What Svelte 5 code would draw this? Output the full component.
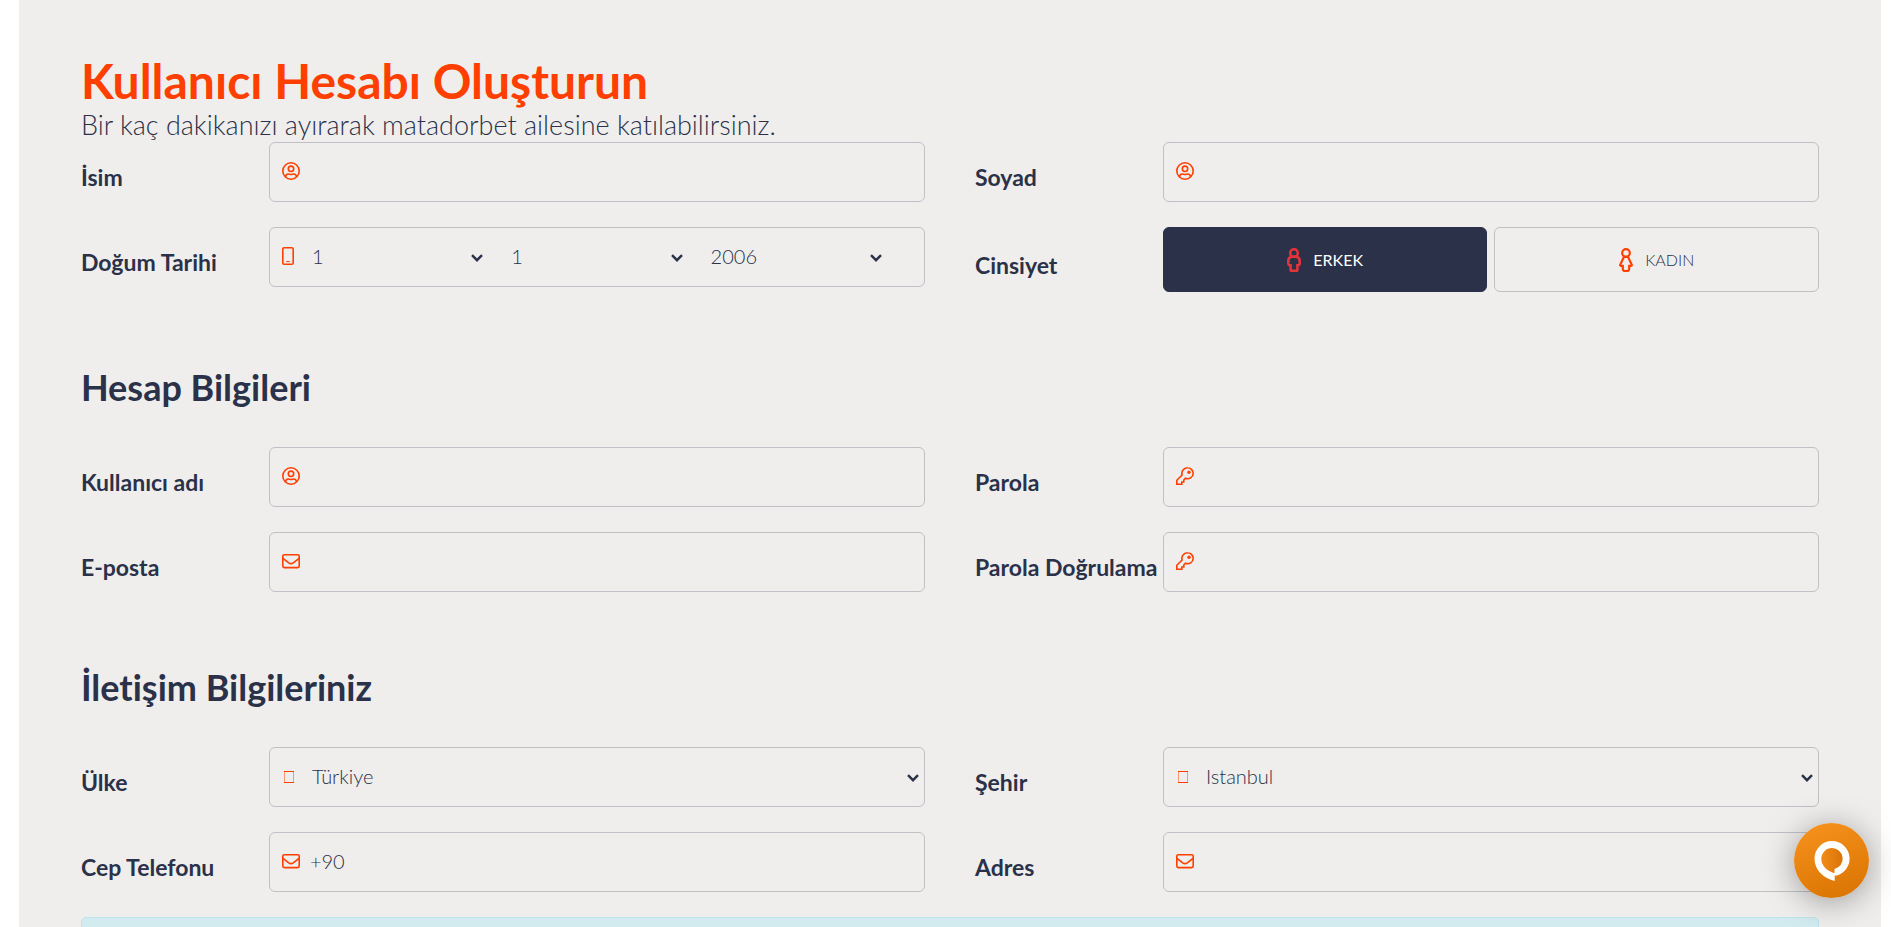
<script lang="ts">
  let firstName = $state('');
  let lastName = $state('');
  let day = $state(1);
  let month = $state(1);
  let year = $state(2006);
  let gender = $state('m');
  let username = $state('');
  let password = $state('');
  let email = $state('');
  let passwordAgain = $state('');
  let country = $state('Türkiye');
  let city = $state('Istanbul');
  let phone = $state('+90');
  let address = $state('');

  const range = (from: number, to: number) => Array.from({ length: to - from + 1 }, (_, i) => from + i);
  const days = range(1, 31);
  const months = range(1, 12);
  const years = range(1930, 2006).reverse();
</script>

{#snippet icon(name: string)}
  <svg class="icon" viewBox="0 0 18 18" aria-hidden="true">
    {#if name === 'user'}
      <circle cx="9" cy="9" r="8.2" />
      <circle cx="9" cy="6.8" r="2.7" />
      <path d="M3.4 14.8c.4-2 1.5-2.8 3-2.8.9 0 1.5.5 2.6.5s1.7-.5 2.6-.5c1.5 0 2.6.8 3 2.8" />
    {:else if name === 'mail'}
      <rect x=".8" y="2.8" width="16.4" height="12.8" rx="1.5" />
      <path d="M1 6.3l5.7 4.5c1.6 1.2 3 1.2 4.6 0L17 6.3" />
    {:else if name === 'key'}
      <path d="M11.6.8a5.6 5.6 0 0 0-5.5 7.2L.8 13.3v3.900h5v-2.200h2v-2l1.600-1.700a5.600 5.600 0 0 0 7.800-5.100A5.600 5.600 0 0 0 11.600.8z" />
      <circle class="dot" cx="13" cy="5.200" r="1.7" />
    {:else if name === 'phone'}
      <rect x=".8" y=".8" width="10.4" height="16.4" rx="1.3" />
      <path class="thin" d="M4.3 14.5h3.4" />
    {:else}
      <path class="thin" d="M2 4.5h10M2 15.5h10" />
      <path class="faint" d="M2.5 5v10M11.5 5v10" />
    {/if}
  </svg>
{/snippet}

{#snippet textField(id: string, label: string, iconName: string, type: string, get: () => string, set: (v: string) => void)}
  <div class="row">
    <label for={id}>{label}</label>
    <div class="field">
      {@render icon(iconName)}
      <input {id} {type} bind:value={get, set} />
    </div>
  </div>
{/snippet}

<main>
  <form onsubmit={(e) => e.preventDefault()}>
    <h1>Kullanıcı Hesabı Oluşturun</h1>
    <p class="lead">Bir kaç dakikanızı ayırarak matadorbet ailesine katılabilirsiniz.</p>

    <section class="grid">
      {@render textField('first-name', 'İsim', 'user', 'text', () => firstName, (v) => (firstName = v))}
      {@render textField('last-name', 'Soyad', 'user', 'text', () => lastName, (v) => (lastName = v))}
      <div class="row">
        <label for="day">Doğum Tarihi</label>
        <div class="field date">
          {@render icon('phone')}
          <select id="day" bind:value={day}>
            {#each days as d (d)}<option value={d}>{d}</option>{/each}
          </select>
          <select aria-label="Ay" bind:value={month}>
            {#each months as m (m)}<option value={m}>{m}</option>{/each}
          </select>
          <select aria-label="Yıl" bind:value={year}>
            {#each years as y (y)}<option value={y}>{y}</option>{/each}
          </select>
        </div>
      </div>
      <div class="row">
        <label for="male">Cinsiyet</label>
        <div class="genders">
          <button type="button" id="male" class:active={gender === 'm'} onclick={() => (gender = 'm')}>
            <svg viewBox="0 0 14 24" aria-hidden="true">
              <circle cx="7" cy="5" r="3.8" />
              <path d="M4.600 8.800C2.400 9.300 1.300 10.500 1.300 12.600v3.200c0 .9.600 1.400 1.400 1.600h.9v4c0 1 .5 1.500 1.400 1.500h4c.9 0 1.400-.5 1.400-1.500v-4h.9c.8-.2 1.400-.7 1.400-1.600v-3.200c0-2.100-1.100-3.300-3.300-3.800z" />
            </svg>
            ERKEK
          </button>
          <button type="button" class:active={gender === 'f'} onclick={() => (gender = 'f')}>
            <svg viewBox="0 0 14 24" aria-hidden="true">
              <circle cx="7" cy="5" r="3.8" />
              <path d="M5 8.8L1.2 16.8c-.2.6.2 1 .8 1h1.800v3c0 1.500 1 2.200 2 2.200h2.400c1 0 2-.7 2-2.200v-3H12c.6 0 1-.4.8-1L9 8.8z" />
            </svg>
            KADIN
          </button>
        </div>
      </div>
    </section>

    <h2>Hesap Bilgileri</h2>
    <section class="grid">
      {@render textField('username', 'Kullanıcı adı', 'user', 'text', () => username, (v) => (username = v))}
      {@render textField('password', 'Parola', 'key', 'password', () => password, (v) => (password = v))}
      {@render textField('email', 'E-posta', 'mail', 'email', () => email, (v) => (email = v))}
      {@render textField('password-again', 'Parola Doğrulama', 'key', 'password', () => passwordAgain, (v) => (passwordAgain = v))}
    </section>

    <h2>İletişim Bilgileriniz</h2>
    <section class="grid">
      <div class="row">
        <label for="country">Ülke</label>
        <div class="field">
          {@render icon('missing')}
          <select id="country" bind:value={country}>
            <option>Türkiye</option>
          </select>
        </div>
      </div>
      <div class="row">
        <label for="city">Şehir</label>
        <div class="field">
          {@render icon('missing')}
          <select id="city" bind:value={city}>
            <option>Istanbul</option>
          </select>
        </div>
      </div>
      {@render textField('phone', 'Cep Telefonu', 'mail', 'tel', () => phone, (v) => (phone = v))}
      {@render textField('address', 'Adres', 'mail', 'text', () => address, (v) => (address = v))}
    </section>

    <div class="notice"></div>
  </form>
</main>

<button type="button" class="chat" aria-label="Canlı destek">
  <svg viewBox="0 0 36 40" aria-hidden="true">
    <defs>
      <linearGradient id="chat-hole">
        <stop offset="0" stop-color="#f08b18" />
        <stop offset="1" stop-color="#da7408" />
      </linearGradient>
    </defs>
    <path fill="#fff" d="M18 0a17.500 17.500 0 0 1 2.700 34.800V40C10 37.500.5 29.500.5 17.500A17.500 17.500 0 0 1 18 0z" />
    <path fill="url(#chat-hole)" d="M18 7a10.700 10.700 0 0 1 2.500 21.100v4.200C13.500 30 7.300 25 7.300 17.700A10.700 10.700 0 0 1 18 7z" />
  </svg>
</button>

<style>
  :global(body) {
    background: #fff;
    color: #2a3149;
    font-family: Lato, "Open Sans", sans-serif;
    font-variant-ligatures: none;
  }
  main {
    margin: 0 10px 0 1%;
    background: #efeeec;
    min-height: 100vh;
    box-sizing: border-box;
    padding: 55px 62px 0;
  }
  h1 { margin: 0; font-size: 48px; line-height: 52px; color: #ff3f00; }
  h2 { margin: 0; padding: 73px 0 38px; font-size: 36px; line-height: 44px; }
  .lead { margin: 0; font-size: 27px; line-height: 35px; font-weight: 300; }

  .grid {
    display: grid;
    grid-template-columns: 1fr 1fr;
    gap: 25px 50px;
    align-items: start;
  }
  .row {
    display: grid;
    grid-template-columns: 188px 1fr;
    align-items: center;
  }
  label { padding-top: 10px; font-size: 23px; line-height: 30px; font-weight: 700; white-space: nowrap; }

  .field {
    display: flex;
    align-items: center;
    height: 60px;
    box-sizing: border-box;
    border: 1px solid #bfc1c6;
    border-radius: 6px;
    padding: 0 1px 2px 12px;
  }
  .icon {
    flex: none;
    width: 18px; height: 18px;
    fill: none; stroke: #ff3f00; stroke-width: 1.6;
  }
  .dot { fill: #ff3f00; stroke: none; }
  .thin { stroke-width: 1; }
  .faint { stroke-width: 1; opacity: 0.5; }
  input, select {
    flex: 1;
    min-width: 0;
    height: 48px;
    border: none;
    background: transparent;
    color: inherit;
    font: 300 20px/26px Lato, "Open Sans", sans-serif;
    outline: none;
  }
  input { padding: 0 10px; }
  select {
    appearance: none;
    margin-left: 8px;
    padding: 0 20px 0 4px;
    background: url("data:image/svg+xml,%3Csvg xmlns='http://www.w3.org/2000/svg' width='12' height='8'%3E%3Cpath d='M1 1.2l5 5 5-5' fill='none' stroke='%232a3149' stroke-width='2.4'/%3E%3C/svg%3E") no-repeat right 4px top 22px;
  }
  .date { gap: 20px; padding-right: 38px; }
  .date .icon { margin-right: -12px; }
  .date select { margin: 0; }

  .genders { display: grid; grid-template-columns: 1fr 1fr; gap: 7px; }
  .genders button {
    display: flex; align-items: center; justify-content: center; gap: 12px;
    height: 65px;
    border: 1px solid #bfc1c6;
    border-radius: 6px;
    background: transparent;
    color: inherit;
    font: 300 16px/20px Lato, "Open Sans", sans-serif;
    cursor: pointer;
  }
  .genders svg { width: 14px; height: 24px; fill: none; stroke: #ff3f00; stroke-width: 2.2; }
  .genders .active { background: #2a3149; border-color: #2a3149; color: #fff; font-weight: 400; }
  .genders .active svg { stroke: #e3343a; stroke-width: 2.6; }

  .notice {
    height: 60px;
    margin-top: 25px;
    border: 1px solid #bee5eb;
    border-radius: 5px;
    background: #d1ebef;
  }

  .chat {
    position: fixed;
    right: 22px; bottom: 29px;
    display: grid; place-items: center;
    width: 75px; height: 75px;
    padding: 0;
    border: none; border-radius: 50%;
    background: linear-gradient(160deg, #f7931e, #d87200);
    box-shadow: 0 4px 32px rgba(0, 0, 0, 0.35);
    cursor: pointer;
  }
  .chat svg { width: 36px; height: 40px; }
</style>
